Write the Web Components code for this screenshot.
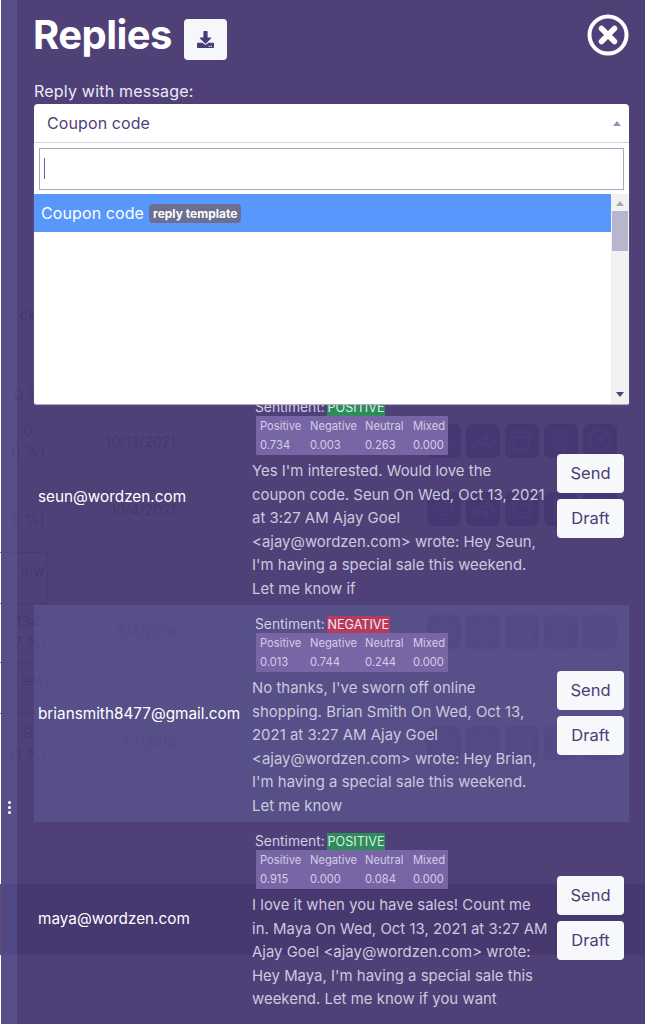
<!DOCTYPE html>
<html>
<head>
<meta charset="utf-8">
<title>Replies</title>
<style>
    html, body { margin: 0; padding: 0; background: #fff; overflow: hidden; }
    body { width: 645px; height: 1024px; font-family: Inter, "Liberation Sans", sans-serif; }
</style>
</head>
<body>
<ghost-page>
    <ghost-row h="28" first="ck"></ghost-row>
    <ghost-row h="54"></ghost-row>
    <ghost-row h="25" first="0 %"></ghost-row>
    <ghost-row h="68" first="0" second="0 %)" date="10/13/2021" icons></ghost-row>
    <ghost-row h="68" second="0 %)" date="10/4/2021" icons></ghost-row>
    <ghost-row h="67" view></ghost-row>
    <ghost-row h="43" first="134" second=".7 %)" date="8/4/2018" icons></ghost-row>
    <ghost-row h="68" view></ghost-row>
    <ghost-row h="43" first="9" second="(1 %)" date="7/1/2018" icons></ghost-row>
</ghost-page>

<reply-panel>
    <reply-row email="seun@wordzen.com" sentiment="POSITIVE" scores="0.734,0.003,0.263,0.000">Yes I'm interested. Would love the<br>coupon code. Seun On Wed, Oct 13, 2021<br>at 3:27 AM Ajay Goel<br>&lt;ajay@wordzen.com&gt; wrote: Hey Seun,<br>I'm having a special sale this weekend.<br>Let me know if</reply-row>
    <reply-row email="briansmith8477@gmail.com" sentiment="NEGATIVE" scores="0.013,0.744,0.244,0.000" alt>No thanks, I've sworn off online<br>shopping. Brian Smith On Wed, Oct 13,<br>2021 at 3:27 AM Ajay Goel<br>&lt;ajay@wordzen.com&gt; wrote: Hey Brian,<br>I'm having a special sale this weekend.<br>Let me know</reply-row>
    <reply-row email="maya@wordzen.com" sentiment="POSITIVE" scores="0.915,0.000,0.084,0.000">I love it when you have sales! Count me<br>in. Maya On Wed, Oct 13, 2021 at 3:27 AM<br>Ajay Goel &lt;ajay@wordzen.com&gt; wrote:<br>Hey Maya, I'm having a special sale this<br>weekend. Let me know if you want</reply-row>
</reply-panel>

<script>
(function(){
    const FONT = 'Inter, "Liberation Sans", sans-serif';

    //the faint page that shows through the overlay
    class GhostPage extends HTMLElement {
        constructor(){
            super();
            this.attachShadow({mode:'open'});
            this.shadowRoot.innerHTML = `
            <style>
                :host { display: block; width: 645px; height: 1024px; background: #fff; overflow: hidden; font-family: ${FONT}; }
                .top { height: 300px; }
                .gap { height: 120px; }
                .band { height: 71px; background: #6b4a6b; }
            </style>
            <div class="top"></div>
            <slot></slot>
            <div class="gap"></div>
            <div class="band"></div>`;
        }
    }
    customElements.define('ghost-page', GhostPage);

    const ghostIcons = [
        '<path d="M6 17s5-7 11-7 11 7 11 7-5 7-11 7-11-7-11-7z"/><circle cx="17" cy="17" r="3"/>',
        '<path d="M6 25c2-7 8-10 15-10V10l8 8-8 7v-5c-6 0-10 1-15 5z"/>',
        '<path d="M7 8h20v5H7zM9 13v13h16V13"/>',
        '<path d="M11 7h4v20h-4zM19 7h4v20h-4z"/>',
        '<circle cx="17" cy="17" r="11"/><path d="M12 12l10 10M22 12L12 22"/>'
    ];

    class GhostRow extends HTMLElement {
        constructor(){
            super();
            this.attachShadow({mode:'open'});
        }
        connectedCallback(){
            const a = (n) => this.getAttribute(n) || '';
            let icons = '';
            if(this.hasAttribute('icons')){
                icons = ghostIcons.map(p => `<span class="ib"><svg viewBox="0 0 34 34" width="33" height="33" fill="none" stroke="#8088c0" stroke-width="2.5">${p}</svg></span>`).join('');
            }
            this.shadowRoot.innerHTML = `
            <style>
                :host { display: flex; align-items: center; height: ${a('h')}px; color: #444; font-size: 14px; }
                .first { width: 56px; flex: none; text-align: center; font-size: 15px; line-height: 21px; }
                .view { width: 48px; height: 52px; flex: none; box-sizing: border-box; border-top: 1px solid #c8664f; border-bottom: 1px solid #c8664f; border-right: 1px solid #999; text-align: right; padding: 8px 2px 0 0; font-size: 15px; margin-top: 2px; }
                .wrap { width: 120px; flex: none; text-align: right; }
                .icons { margin-left: auto; margin-right: 28px; display: flex; gap: 5px; }
                .ib { width: 34px; height: 34px; border-radius: 6px; background: #2d3a80; display: block; }
                .ib svg { display: block; }
            </style>
            ${this.hasAttribute('view') ? '<div class="view">iew</div>' : `
                <div class="first">${a('first')}${a('second') ? '<br>' + a('second') : ''}</div>
                <div class="wrap">${a('date')}</div>
                <div class="icons">${icons}</div>`}`;
        }
    }
    customElements.define('ghost-row', GhostRow);

    //searchable select, opened
    class ReplySelect extends HTMLElement {
        constructor(){
            super();
            this.attachShadow({mode:'open'});
            this.shadowRoot.innerHTML = `
            <style>
                :host { display: block; position: relative; height: 39px; font-size: 16px; }
                .box { height: 39px; box-sizing: border-box; background: #fff; border-radius: 4px 4px 0 0; border-bottom: 1px solid #d5d2e0; display: flex; align-items: center; justify-content: space-between; padding: 0 8px 0 13px; color: #4f4179; letter-spacing: .1px; }
                .up { width: 0; height: 0; border: 4.5px solid transparent; border-top: 0; border-bottom: 5px solid #9a90b4; }
                .drop { position: absolute; left: 0; right: 0; top: 39px; height: 261px; background: #fff; box-shadow: 0 1px 1px #b5b0c8; border-radius: 0 0 2px 2px; display: flex; flex-direction: column; }
                .search { margin: 5px 5px 4px; height: 42px; flex: none; box-sizing: border-box; border: 1px solid #aaa6bf; padding: 9px 4px; }
                .caret { width: 1px; height: 21px; background: #6a5f96; }
                .list { flex: 1; display: flex; min-height: 0; }
                .options { flex: 1; }
                .opt { height: 38px; background: #5897fb; color: #fff; display: flex; align-items: center; padding-left: 7px; gap: 5px; letter-spacing: .1px; }
                .tag { background: #6c6f90; border-radius: 4px; font-size: 12px; font-weight: 700; padding: 3px 4px; line-height: 13px; letter-spacing: 0; }
                .bar { width: 18px; background: #f1f1f1; display: flex; flex-direction: column; align-items: center; }
                .bar .a { margin-top: 7px; width: 0; height: 0; border: 4px solid transparent; border-top: 0; border-bottom: 5px solid #a8a3bc; }
                .bar .thumb { margin-top: 5px; width: 16px; height: 40px; background: #b8b5cd; }
                .bar .d { margin-top: auto; margin-bottom: 7px; width: 0; height: 0; border: 4px solid transparent; border-bottom: 0; border-top: 5px solid #4f4179; }
            </style>
            <div class="box"><span>Coupon code</span><span class="up"></span></div>
            <div class="drop">
                <div class="search"><div class="caret"></div></div>
                <div class="list">
                    <div class="options">
                        <div class="opt">Coupon code <span class="tag">reply template</span></div>
                    </div>
                    <div class="bar"><span class="a"></span><span class="thumb"></span><span class="d"></span></div>
                </div>
            </div>`;
        }
    }
    customElements.define('reply-select', ReplySelect);

    class SentimentTable extends HTMLElement {
        constructor(){
            super();
            this.attachShadow({mode:'open'});
        }
        connectedCallback(){
            const v = (this.getAttribute('scores') || '').split(',');
            const names = ['Positive','Negative','Neutral','Mixed'];
            const widths = [50,55,48,35];
            const col = (i) => `<div class="c" style="width:${widths[i]}px"><span>${names[i]}</span><span>${v[i]}</span></div>`;
            this.shadowRoot.innerHTML = `
            <style>
                :host { display: flex; width: 192px; height: 39px; box-sizing: border-box; padding-left: 4px; background: #7765a5; color: #d3cde6; font-size: 11.2px; }
                .c { display: flex; flex-direction: column; justify-content: space-around; flex: none; padding: 1px 0; white-space: nowrap; }
            </style>
            ${names.map((n,i) => col(i)).join('')}`;
        }
    }
    customElements.define('sentiment-table', SentimentTable);

    class ReplyRow extends HTMLElement {
        constructor(){
            super();
            this.attachShadow({mode:'open'});
        }
        connectedCallback(){
            const sentiment = this.getAttribute('sentiment');
            const scores = this.getAttribute('scores');
            this.shadowRoot.innerHTML = `
            <style>
                :host { display: flex; align-items: center; background: transparent; padding-right: 5px; }
                :host([alt]) { background: rgba(98,98,155,.45); }
                .email { width: 218px; flex: none; box-sizing: border-box; padding-left: 4px; color: #fff; font-size: 15.3px; white-space: nowrap; }
                .main { flex: 1; padding: 11px 0 4px; min-width: 0; }
                .line { font-size: 13.8px; height: 17px; line-height: 17px; padding-left: 3px; color: #d3cde6; white-space: nowrap; }
                .badge { color: #d6f0df; padding: 0 1px; display: inline-block; height: 17px; font-size: 12.6px; margin-left: -2px; }
                .POSITIVE { background: #2f8a5c; }
                .NEGATIVE { background: #b53b5c; color: #fbe3e8; }
                sentiment-table { margin: 0 0 5px 4px; }
                .msg { font-size: 14.9px; line-height: 23.5px; letter-spacing: .03px; color: #cdc8de; white-space: nowrap; }
                .btns { width: 67px; flex: none; display: flex; flex-direction: column; gap: 6px; padding-bottom: 2px; }
                button { height: 39px; border: 0; border-radius: 4px; background: #f7f8fc; color: #4a3d75; font: 16.5px ${FONT}; padding: 0; }
            </style>
            <div class="email">${this.getAttribute('email')}</div>
            <div class="main">
                <div class="line">Sentiment: <span class="badge ${sentiment}">${sentiment}</span></div>
                <sentiment-table scores="${scores}"></sentiment-table>
                <div class="msg"><slot></slot></div>
            </div>
            <div class="btns"><button>Send</button><button>Draft</button></div>`;
        }
    }
    customElements.define('reply-row', ReplyRow);

    //the overlay itself, lying over the ghost page
    class ReplyPanel extends HTMLElement {
        constructor(){
            super();
            this.attachShadow({mode:'open'});
            this.shadowRoot.innerHTML = `
            <style>
                :host { display: flex; position: absolute; inset: 0; font-family: ${FONT}; }
                .edge { width: 1px; flex: none; }
                .strip { width: 16px; flex: none; background: rgba(80,72,133,.96); color: #fff; display: flex; flex-direction: column; align-items: center; justify-content: flex-end; padding-bottom: 210px; box-sizing: border-box; gap: 2px; }
                .strip i { width: 3px; height: 3px; background: #fff; border-radius: 50%; display: block; }
                .panel { flex: 1; min-width: 0; background: rgba(70,55,113,.95); padding: 0 16px 0 17px; overflow: hidden; }
                header { display: flex; align-items: center; height: 70px; }
                h1 { margin: 0 0 0 -1px; font-size: 40px; line-height: 70px; font-weight: 700; color: #fff; letter-spacing: -.55px; }
                .dl { width: 43px; height: 41px; margin: 9px 0 0 12px; border-radius: 4px; background: #f6f7fb; display: flex; align-items: center; justify-content: center; }
                .close { margin: -1px 0 0 auto; display: block; }
                label { display: block; height: 34px; line-height: 42px; color: #ece9f4; font-size: 16px; letter-spacing: .2px; }
                .rows { margin-top: 245px; }
                reply-select { z-index: 2; }
            </style>
            <div class="edge"></div>
            <div class="strip"><i></i><i></i><i></i></div>
            <div class="panel">
                <header>
                    <h1>Replies</h1>
                    <span class="dl"><svg viewBox="0 0 512 512" width="17" height="17" fill="#4a3d75"><path d="M216 0h80c13.3 0 24 10.7 24 24v168h87.7c17.8 0 26.7 21.5 14.1 34.1L269.7 378.3c-7.5 7.5-19.8 7.5-27.3 0L90.1 226.1c-12.6-12.6-3.7-34.1 14.1-34.1H192V24c0-13.3 10.7-24 24-24zm296 376v112c0 13.3-10.7 24-24 24H24c-13.3 0-24-10.7-24-24V376c0-13.3 10.7-24 24-24h146.7l49 49c20.1 20.1 52.5 20.1 72.6 0l49-49H488c13.3 0 24 10.7 24 24zm-124 88c0-11-9-20-20-20s-20 9-20 20 9 20 20 20 20-9 20-20zm64 0c0-11-9-20-20-20s-20 9-20 20 9 20 20 20 20-9 20-20z"/></svg></span>
                    <svg class="close" viewBox="0 0 42 42" width="42" height="42" fill="none" stroke="#fff"><circle cx="21" cy="21" r="18.5" stroke-width="4"/><path d="M14.5 14.5l13 13M27.5 14.5l-13 13" stroke-width="5.5" stroke-linecap="round"/></svg>
                </header>
                <label>Reply with message:</label>
                <reply-select></reply-select>
                <div class="rows"><slot></slot></div>
            </div>`;
        }
    }
    customElements.define('reply-panel', ReplyPanel);
})();
</script>
</body>
</html>
